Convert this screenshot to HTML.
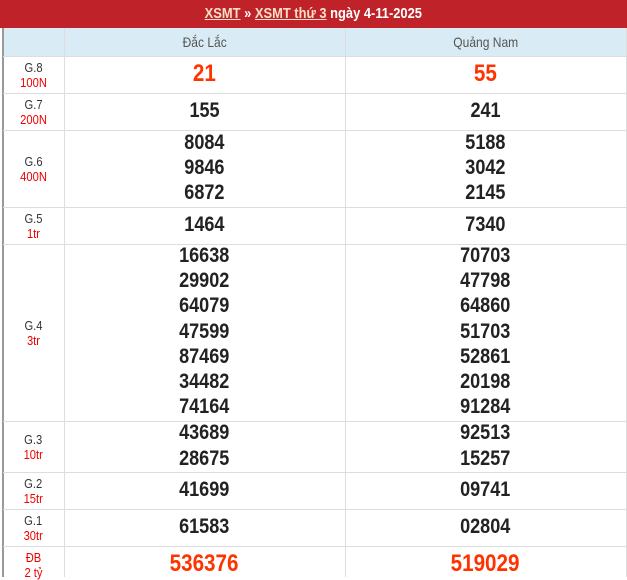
<!DOCTYPE html>
<html><head><meta charset="utf-8"><style>
body{margin:0;width:627px;height:577px;overflow:hidden;background:#fff;font-family:"Liberation Sans",Arial,sans-serif;position:relative}
.a{position:absolute}
.s{display:inline-block;transform:scaleX(0.86);transform-origin:center}
.hd{left:0;top:0;width:627px;height:28px;background:#c0222a;color:#fff;font-weight:bold;font-size:15px;text-align:center;line-height:28px}
.hd u{color:#f8e0c8}
.hr{left:3px;top:28px;width:624px;height:28px;background:#d9ecf5}
.h{line-height:28px;top:28px;font-size:14px;color:#555;text-align:center}
.hl{height:1px;background:#ddd;left:3px;width:624px}
.vl{width:1px;background:#ddd;top:28px;height:549px}
.lb{left:3px;width:61px;text-align:center;font-size:13px;line-height:15px;color:#333}
.lb span{color:#e00}
.n{width:281px;text-align:center;font-weight:bold;font-size:21px;color:#222;line-height:25px}
.c1{left:64px}.c2{left:345px}
.r{color:#ff3300;font-size:24px}
</style></head><body>
<div class="a hd"><span class="s"><u>XSMT</u> » <u>XSMT thứ 3</u> ngày 4-11-2025</span></div>
<div class="a hr"></div>
<div class="a h c1" style="width:281px"><span class="s">Đắc Lắc</span></div>
<div class="a h c2" style="width:281px"><span class="s">Quảng Nam</span></div>
<div class="a" style="left:2px;top:28px;width:2px;height:549px;background:#999"></div>
<div class="a vl" style="left:64px"></div>
<div class="a vl" style="left:345px"></div>
<div class="a vl" style="left:626px"></div>
<div class="a hl" style="top:56px"></div>
<div class="a hl" style="top:93px"></div>
<div class="a hl" style="top:130px"></div>
<div class="a hl" style="top:207px"></div>
<div class="a hl" style="top:244px"></div>
<div class="a hl" style="top:421px"></div>
<div class="a hl" style="top:472px"></div>
<div class="a hl" style="top:509px"></div>
<div class="a hl" style="top:546px"></div>

<div class="a lb" style="top:60px"><span class="s" style="color:#333">G.8<br><span>100N</span></span></div>
<div class="a lb" style="top:97px"><span class="s" style="color:#333">G.7<br><span>200N</span></span></div>
<div class="a lb" style="top:154px"><span class="s" style="color:#333">G.6<br><span>400N</span></span></div>
<div class="a lb" style="top:211px"><span class="s" style="color:#333">G.5<br><span>1tr</span></span></div>
<div class="a lb" style="top:318px"><span class="s" style="color:#333">G.4<br><span>3tr</span></span></div>
<div class="a lb" style="top:432px"><span class="s" style="color:#333">G.3<br><span>10tr</span></span></div>
<div class="a lb" style="top:476px"><span class="s" style="color:#333">G.2<br><span>15tr</span></span></div>
<div class="a lb" style="top:513px"><span class="s" style="color:#333">G.1<br><span>30tr</span></span></div>
<div class="a lb" style="top:550px"><span class="s"><span>ĐB<br>2 tỷ</span></span></div>

<div class="a n r c1" style="top:61px"><span class="s">21</span></div>
<div class="a n r c2" style="top:61px"><span class="s">55</span></div>
<div class="a n c1" style="top:98px"><span class="s">155</span></div>
<div class="a n c2" style="top:98px"><span class="s">241</span></div>
<div class="a n c1" style="top:130px"><span class="s">8084<br>9846<br>6872</span></div>
<div class="a n c2" style="top:130px"><span class="s">5188<br>3042<br>2145</span></div>
<div class="a n c1" style="top:212px"><span class="s">1464</span></div>
<div class="a n c2" style="top:212px"><span class="s">7340</span></div>
<div class="a n c1" style="top:243px;line-height:25.2px"><span class="s">16638<br>29902<br>64079<br>47599<br>87469<br>34482<br>74164</span></div>
<div class="a n c2" style="top:243px;line-height:25.2px"><span class="s">70703<br>47798<br>64860<br>51703<br>52861<br>20198<br>91284</span></div>
<div class="a n c1" style="top:420px;line-height:26px"><span class="s">43689<br>28675</span></div>
<div class="a n c2" style="top:420px;line-height:26px"><span class="s">92513<br>15257</span></div>
<div class="a n c1" style="top:477px"><span class="s">41699</span></div>
<div class="a n c2" style="top:477px"><span class="s">09741</span></div>
<div class="a n c1" style="top:514px"><span class="s">61583</span></div>
<div class="a n c2" style="top:514px"><span class="s">02804</span></div>
<div class="a n r c1" style="top:551px"><span class="s">536376</span></div>
<div class="a n r c2" style="top:551px"><span class="s">519029</span></div>
</body></html>
